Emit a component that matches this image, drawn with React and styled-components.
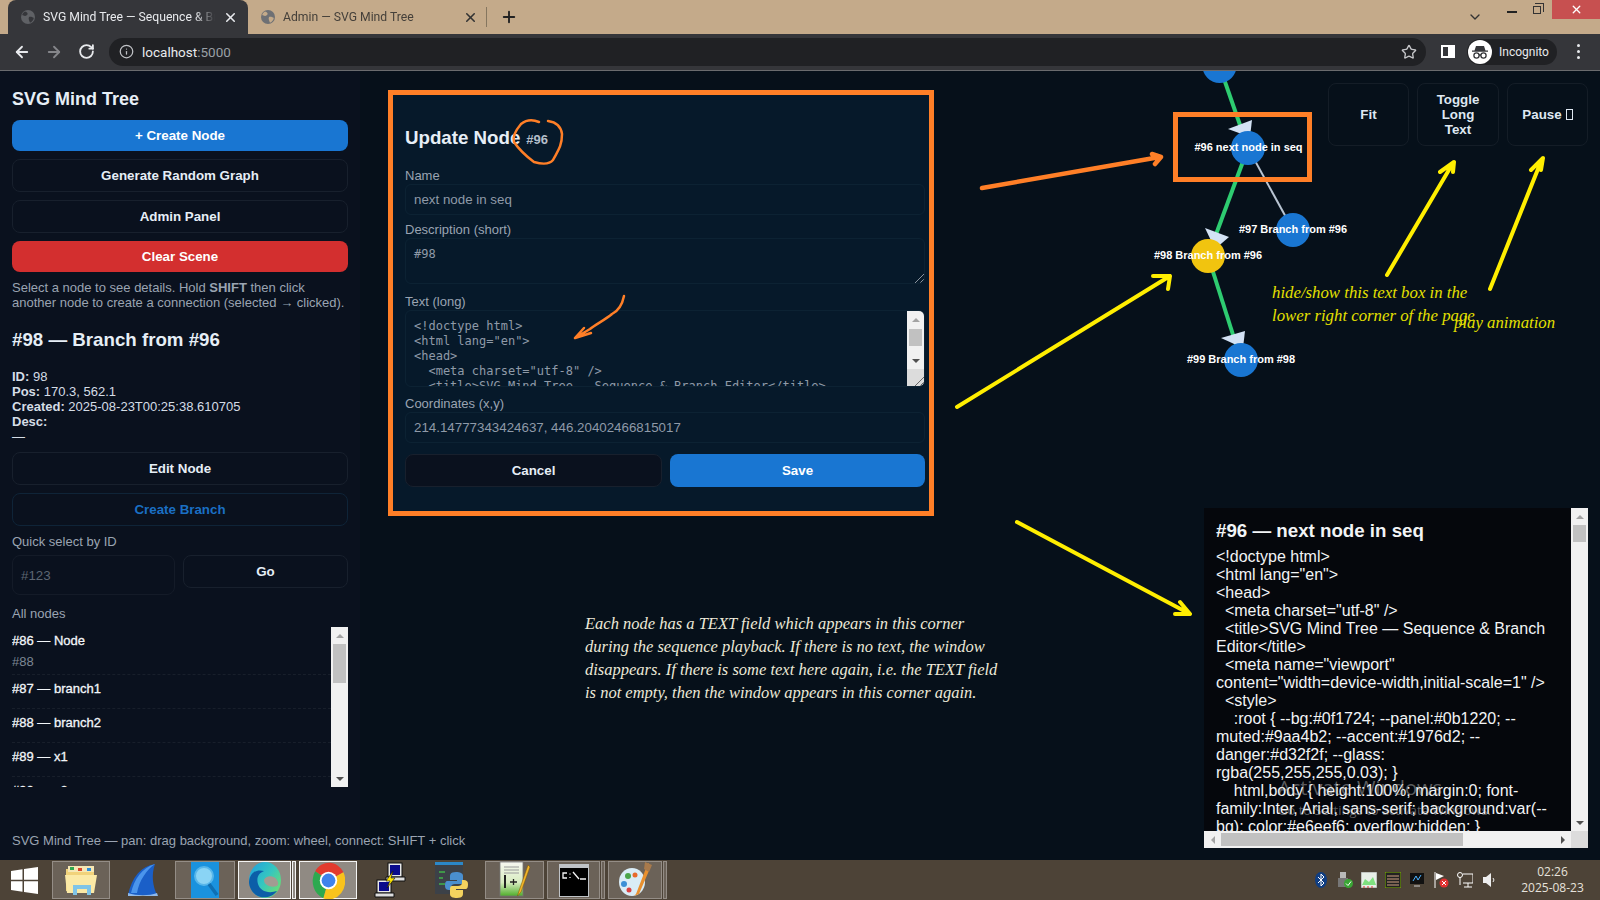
import React from 'react';
import styled, { createGlobalStyle } from 'styled-components';
import { ArrowLeft, ArrowRight, RotateCw, Info, Star, X, Plus, ChevronDown } from 'lucide-react';

const ARIAL = '"Liberation Sans", Arial, sans-serif';
const HAND = '"Liberation Serif", "DejaVu Serif", serif';

const LONG_TEXT = `<!doctype html>
<html lang="en">
<head>
  <meta charset="utf-8" />
  <title>SVG Mind Tree — Sequence & Branch Editor</title>
  <meta name="viewport" content="width=device-width,initial-scale=1" />
  <style>
    :root { --bg:#0f1724; --panel:#0b1220; --muted:#9aa4b2; --accent:#1976d2; --danger:#d32f2f; --glass: rgba(255,255,255,0.03); }
    html,body { height:100%; margin:0; font-family:Inter, Arial, sans-serif; background:var(--bg); color:#e6eef6; overflow:hidden; }
    #app { display:flex; height:100%; }`;

const TEXTAREA_CODE = `<!doctype html>
<html lang="en">
<head>
  <meta charset="utf-8" />
  <title>SVG Mind Tree — Sequence & Branch Editor</title>`;

const GlobalStyle = createGlobalStyle`
	html, body { margin: 0; padding: 0; background: #06101a; overflow: hidden; }
	* { box-sizing: border-box; }
`;

const Shell = styled.div`
	position: relative;
	width: 1600px;
	height: 900px;
	display: flex;
	flex-direction: column;
	overflow: hidden;
	font-family: ${ARIAL};
`;

/* browser chrome */
const TabStrip = styled.div`
	height: 34px;
	background: #c4aa8a;
	display: flex;
	align-items: flex-end;
	padding-left: 8px;
	font-family: Roboto, sans-serif;
	font-size: 12.2px;
`;

const Tab = styled.div`
	width: 240px;
	height: 34px;
	display: flex;
	align-items: center;
	padding: 0 10px 0 13px;
	gap: 8px;
	border-radius: 8px 8px 0 0;
	background: ${p => (p.$active ? '#35363a' : 'transparent')};
	color: ${p => (p.$active ? '#e8eaed' : '#45403a')};
`;

const TabTitle = styled.div`
	flex: 1;
	white-space: nowrap;
	overflow: hidden;
	-webkit-mask-image: linear-gradient(90deg, #000 88%, transparent);
	mask-image: linear-gradient(90deg, #000 88%, transparent);
`;

const TabDivider = styled.div`
	width: 1px;
	height: 20px;
	background: #85765f;
	align-self: center;
	margin-left: -2px;
`;

const NewTab = styled.div`
	align-self: center;
	margin-left: 13px;
	display: flex;
	color: #222;
`;

const WindowControls = styled.div`
	margin-left: auto;
	align-self: flex-start;
	display: flex;
	height: 19px;
	align-items: flex-start;
	color: #333;
`;

const TabSearch = styled.div`
	padding-top: 9px;
	margin-right: 24px;
	display: flex;
`;

const MinimizeGlyph = styled.div`
	width: 10px;
	height: 2px;
	background: #222;
	margin: 11px 16px 0 0;
`;

const RestoreGlyph = styled.div`
	position: relative;
	width: 8px;
	height: 8px;
	border: 1px solid #333;
	margin: 6px 11px 0 0;
	&::after {
		content: '';
		position: absolute;
		left: 1px;
		top: -4px;
		width: 8px;
		height: 8px;
		border: 1px solid #333;
		border-left: 0;
		border-bottom: 0;
	}
`;

const CloseBox = styled.div`
	width: 48px;
	height: 19px;
	background: #c75050;
	color: #fff;
	display: flex;
	align-items: center;
	justify-content: center;
`;

const Toolbar = styled.div`
	height: 37px;
	background: #35363a;
	border-bottom: 1px solid #6a6b6e;
	display: flex;
	align-items: center;
	padding: 0 0 1px 13px;
	color: #e8eaed;
`;

const NavButton = styled.div`
	width: 18px;
	margin-right: 14px;
	display: flex;
	justify-content: center;
	color: ${p => (p.$off ? '#85868a' : '#e8eaed')};
`;

const Omnibox = styled.div`
	width: 1317px;
	height: 28px;
	border-radius: 14px;
	background: #202124;
	display: flex;
	align-items: center;
	padding: 0 10px;
	font-family: Roboto, sans-serif;
	font-size: 13.5px;
	color: #e8eaed;
`;

const UrlPort = styled.span`
	color: #9aa0a6;
`;

const InfoSlot = styled.div`
	display: flex;
	margin-right: 8px;
	color: #c0c2c6;
`;

const StarSlot = styled.div`
	display: flex;
	margin-left: auto;
	margin-right: -1px;
	color: #c6c7ca;
`;

const SidePanelGlyph = styled.div`
	width: 14px;
	height: 13px;
	margin-left: 15px;
	border: 2px solid #fff;
	border-right-width: 7px;
	background: #35363a;
`;

const IncognitoPill = styled.div`
	margin-left: 12px;
	width: 90px;
	height: 26px;
	border-radius: 13px;
	background: #202124;
	display: flex;
	align-items: center;
	padding-left: 1px;
	gap: 7px;
	font-family: Roboto, sans-serif;
	font-size: 12px;
	color: #e8eaed;
`;

const MenuDots = styled.div`
	margin-left: 20px;
	display: flex;
	flex-direction: column;
	gap: 3px;
	i {
		width: 3px;
		height: 3px;
		border-radius: 50%;
		background: #e8eaed;
	}
`;

/* app */
const Workspace = styled.div`
	position: relative;
	flex: 1;
	display: flex;
	min-height: 0;
`;

const Sidebar = styled.aside`
	width: 360px;
	padding: 18px 12px 0;
	background: #0a111e;
	color: #e6eef6;
	font-size: 13px;
`;

const Title = styled.h1`
	margin: 0 0 10px;
	font-size: 18px;
	line-height: 21px;
	font-weight: 700;
`;

const Buttons = styled.div`
	display: flex;
	flex-direction: column;
	gap: 8px;
	margin-top: ${p => p.$top || 0}px;
`;

const Button = styled.div`
	display: flex;
	align-items: center;
	justify-content: center;
	text-align: center;
	padding: 8px;
	line-height: 15px;
	font-size: 13.33px;
	font-weight: 700;
	border-radius: 8px;
	color: ${p => (p.$kind === 'link' ? '#1a6fc4' : '#e6eef6')};
	background: ${p => (p.$kind === 'primary' ? '#1976d2' : p.$kind === 'danger' ? '#d32f2f' : '#0a111e')};
	border: ${p => (p.$kind === 'primary' || p.$kind === 'danger'
		? 'none'
		: p.$kind === 'link' ? '1px solid #0f2438' : '1px solid #18202d')};
	${p => (p.$kind === 'primary' || p.$kind === 'danger' ? 'color: #fff;' : '')}
`;

const Hint = styled.p`
	margin: 8px 0 0;
	line-height: 15px;
	color: #9aa4b2;
	b { font-weight: 700; }
`;

const NodeHeading = styled.h2`
	margin: 19px 0 0;
	font-size: 18.72px;
	line-height: 21px;
	font-weight: 700;
`;

const NodeInfo = styled.div`
	margin-top: 19px;
	line-height: 15px;
	color: #d5dde6;
	b { font-weight: 700; }
`;

const MutedLabel = styled.div`
	margin-top: ${p => p.$top}px;
	line-height: 15px;
	font-size: 13px;
	color: #9aa4b2;
`;

const QuickRow = styled.div`
	margin-top: 6px;
	display: grid;
	grid-template-columns: 163px 1fr;
	gap: 8px;
	align-items: start;
`;

const QuickInput = styled.div`
	height: 40px;
	padding-left: 8px;
	display: flex;
	align-items: center;
	border: 1px solid #141b28;
	border-radius: 8px;
	font-size: 13.33px;
	color: #5d6672;
`;

const NodeList = styled.div`
	margin-top: 6px;
	height: 160px;
	display: flex;
	overflow: hidden;
`;

const NodeRows = styled.div`
	flex: 1;
	overflow: hidden;
`;

const NodeRow = styled.div`
	padding: 6px 0 11px;
	border-bottom: 1px dashed rgba(255, 255, 255, 0.06);
	font-size: 13px;
	line-height: 16px;
	color: #f2f6fa;
	-webkit-text-stroke: 0.3px #f2f6fa;
`;

const NodeDesc = styled.div`
	margin: 5px 0 -6px;
	line-height: 15px;
	color: #7d8794;
	-webkit-text-stroke: 0;
`;

const StatusLine = styled.div`
	position: absolute;
	left: 12px;
	bottom: 11px;
	font-size: 13px;
	line-height: 16px;
	color: #9aa4b2;
	z-index: 2;
`;

/* scrollbars */
const ScrollV = styled.div`
	width: 17px;
	flex: none;
	display: flex;
	flex-direction: column;
	background: #f1f1f1;
`;

const ScrollH = styled.div`
	height: 17px;
	flex: 1;
	display: flex;
	align-items: center;
	background: #f1f1f1;
`;

const ArrowCell = styled.div`
	flex: none;
	width: 17px;
	height: 17px;
	display: flex;
	align-items: center;
	justify-content: center;
`;

const Triangle = styled.div`
	width: 0;
	height: 0;
	border: 4px solid transparent;
	${p => ({
		up: 'border-bottom-color: #a3a3a3; border-top-width: 0;',
		down: 'border-top-color: #505050; border-bottom-width: 0;',
		left: 'border-right-color: #a3a3a3; border-left-width: 0;',
		right: 'border-left-color: #505050; border-right-width: 0;',
	}[p.$dir])}
`;

const ThumbV = styled.div`
	flex: none;
	height: ${p => p.$size}px;
	margin: ${p => p.$offset || 0}px 2px 0;
	background: #c1c1c1;
`;

const ThumbH = styled.div`
	flex: none;
	width: ${p => p.$size}px;
	height: 13px;
	background: #c1c1c1;
`;

const Spacer = styled.div`
	flex: 1;
`;

const ScrollCorner = styled.div`
	flex: none;
	width: 17px;
	height: 17px;
	background: #dcdcdc;
`;

const GripBox = styled.svg`
	display: block;
	width: 9px;
	height: 9px;
	margin: 8px 0 0 8px;
	stroke: ${p => (p.$dark ? '#666' : '#8a939e')};
	stroke-width: 1;
`;

const Grip = ({ dark }) => (
	<GripBox $dark={dark} viewBox="0 0 9 9">
		<path d="M0 9 L9 0 M5 9 L9 5" />
	</GripBox>
);

const VBar = ({ thumb, offset, corner }) => (
	<ScrollV>
		<ArrowCell><Triangle $dir="up" /></ArrowCell>
		<ThumbV $size={thumb} $offset={offset} />
		<Spacer />
		<ArrowCell><Triangle $dir="down" /></ArrowCell>
		{corner && <ScrollCorner><Grip dark /></ScrollCorner>}
	</ScrollV>
);

/* canvas */
const Canvas = styled.main`
	position: relative;
	flex: 1;
	background: #06101a;
	overflow: hidden;
`;

const Graph = styled.svg`
	position: absolute;
	left: 0;
	top: 0;
	width: 1240px;
	height: 789px;
`;

const NodeLabel = styled.text`
	font-family: ${ARIAL};
	font-size: 11px;
	font-weight: 700;
	fill: #fff;
	text-anchor: middle;
`;

const CanvasControls = styled.div`
	position: absolute;
	top: 12px;
	right: 12px;
	display: flex;
	gap: 8px;
`;

const ControlButton = styled.div`
	width: ${p => p.$width}px;
	height: 63px;
	display: flex;
	align-items: center;
	justify-content: center;
	text-align: center;
	padding: 0 14px;
	border: 1px solid #141d27;
	border-radius: 8px;
	font-size: 13.33px;
	line-height: 15px;
	font-weight: 700;
	color: #dfe8f2;
`;

const TofuGlyph = styled.span`
	display: inline-block;
	width: 7px;
	height: 11px;
	margin-left: 4px;
	border: 1px solid #dfe8f2;
	vertical-align: -1px;
`;

/* update modal */
const Modal = styled.section`
	position: absolute;
	left: 28px;
	top: 19px;
	width: 546px;
	height: 426px;
	padding: 32px 4px 0 12px;
	background: #06192a;
	border: 5px solid #ff7f27;
	color: #e6eef6;
`;

const ModalTitle = styled.div`
	display: flex;
	align-items: baseline;
	font-size: 18.72px;
	line-height: 21px;
	font-weight: 700;
`;

const ModalId = styled.span`
	margin-left: 6px;
	font-size: 13px;
	color: #b4bfcb;
`;

const FieldLabel = styled.div`
	margin: ${p => p.$top}px 0 1px;
	font-size: 13px;
	line-height: 15px;
	color: #9aa4b2;
`;

const Field = styled.div`
	height: ${p => p.$height}px;
	position: relative;
	display: flex;
	border: 1px solid #0c2233;
	border-radius: 6px;
	padding-left: 8px;
	font-size: 13.33px;
	line-height: 29px;
	color: #8f9aa8;
	overflow: hidden;
`;

const ShortText = styled.div`
	font-family: "DejaVu Sans Mono", monospace;
	font-size: 12px;
	line-height: 15px;
	padding-top: 8px;
`;

const CodeText = styled.pre`
	flex: 1;
	margin: 0;
	padding-top: 8px;
	font-family: "DejaVu Sans Mono", monospace;
	font-size: 12px;
	line-height: 15px;
	color: #8f9aa8;
	white-space: pre;
	overflow: hidden;
`;

const GripSlot = styled.div`
	position: absolute;
	right: 0;
	bottom: 0;
	width: 17px;
	height: 17px;
`;

const ModalActions = styled.div`
	margin-top: 11px;
	display: grid;
	grid-template-columns: 257px 255px;
	gap: 8px;
`;

/* text panel */
const TextPanel = styled.div`
	position: absolute;
	right: 12px;
	bottom: 12px;
	width: 384px;
	height: 340px;
	display: grid;
	grid-template-columns: 1fr 17px;
	grid-template-rows: 1fr 17px;
	background: #05070c;
	color: #f2f4f6;
`;

const TextBody = styled.div`
	overflow: hidden;
	padding: 12px 12px 0;
`;

const TextTitle = styled.div`
	font-size: 18.72px;
	line-height: 21px;
	font-weight: 700;
	margin-bottom: 7px;
`;

const TextContent = styled.div`
	font-size: 16px;
	line-height: 18px;
	white-space: pre-wrap;
`;

const Watermark = styled.div`
	position: absolute;
	left: 74px;
	top: 267px;
	color: rgba(200, 200, 200, 0.45);
	font-family: "Open Sans", sans-serif;
	font-size: 20px;
	line-height: 26px;
	white-space: nowrap;
	pointer-events: none;
	small {
		display: block;
		font-size: 13px;
		line-height: 18px;
	}
`;

/* annotations */
const Ink = styled.svg`
	position: absolute;
	left: 0;
	top: 0;
	width: 1600px;
	height: 900px;
	z-index: 5;
	pointer-events: none;
	fill: none;
	stroke-linecap: round;
	stroke-linejoin: round;
`;

const Note = styled.div`
	position: absolute;
	z-index: 6;
	left: ${p => p.$x}px;
	top: ${p => p.$y}px;
	font-family: ${HAND};
	font-style: italic;
	font-size: ${p => p.$size}px;
	line-height: ${p => p.$lead}px;
	color: ${p => p.$color};
	white-space: pre;
	pointer-events: none;
`;

/* taskbar */
const Taskbar = styled.footer`
	height: 40px;
	background: #4d4337;
	display: flex;
	align-items: stretch;
`;

const StartButton = styled.div`
	width: 52px;
	display: flex;
	align-items: center;
	padding-left: 11px;
`;

const TaskItems = styled.div`
	display: flex;
	gap: 3px;
	padding: 1px 0;
`;

const TaskItem = styled.div`
	width: ${p => p.$width}px;
	display: flex;
	gap: 1px;
`;

const TaskFace = styled.div`
	flex: 1;
	display: flex;
	align-items: center;
	justify-content: center;
	background: ${p => (p.$state === 'active' ? 'rgba(255,255,255,0.38)' : p.$state === 'open' ? 'rgba(255,255,255,0.17)' : 'transparent')};
	border: ${p => (p.$state === 'active' ? '1.5px solid rgba(255,255,255,0.9)' : p.$state === 'open' ? '1px solid rgba(255,255,255,0.28)' : '1px solid transparent')};
`;

const TaskStack = styled.div`
	width: 4px;
	background: ${p => (p.$state === 'active' ? 'rgba(255,255,255,0.38)' : 'rgba(255,255,255,0.17)')};
	border: ${p => (p.$state === 'active' ? '1px solid rgba(255,255,255,0.9)' : '1px solid rgba(255,255,255,0.28)')};
`;

const Tray = styled.div`
	margin-left: auto;
	display: flex;
	align-items: center;
	gap: 8px;
`;

const Clock = styled.div`
	width: 95px;
	text-align: center;
	font-family: "Open Sans", sans-serif;
	font-size: 12px;
	line-height: 16px;
	color: #e6e2dc;
`;

/* icons */
const Globe = ({ light }) => (
	<svg width="14" height="14" viewBox="0 0 14 14" style={{ flex: 'none' }}>
		<circle cx="7" cy="7" r="7" fill={light ? '#6e7074' : '#5f6165'} />
		<path d="M4 1.5 C6 2 7 3 6.5 4.5 C5.5 5 5.5 6 4 6 C3 6 2 5 1.2 5 C1.5 3.5 2.5 2.2 4 1.5Z M8 7 C10 6.5 12 7.5 12.8 8 C12.5 10 11 12 9 12.8 C8.5 11 7 9 8 7Z" fill={light ? '#c4aa8a' : '#35363a'} />
	</svg>
);

const IncognitoIcon = () => (
	<svg width="24" height="24" viewBox="0 0 24 24" style={{ flex: 'none' }}>
		<circle cx="12" cy="12" r="12" fill="#fff" />
		<path d="M8 6 H16 L17.5 10.5 H20 V11.8 H4 V10.5 H6.5Z" fill="#35363a" />
		<circle cx="8.5" cy="15.5" r="2.6" fill="none" stroke="#35363a" strokeWidth="1.3" />
		<circle cx="15.5" cy="15.5" r="2.6" fill="none" stroke="#35363a" strokeWidth="1.3" />
		<path d="M11 15 H13" stroke="#35363a" strokeWidth="1.3" />
	</svg>
);

const WindowsLogo = () => (
	<svg width="27" height="27" viewBox="0 0 27 27" fill="#fff">
		<path d="M0 4 L11.5 2.3 V12.8 H0Z M13 2.1 L27 0 V12.8 H13Z M0 14.2 H11.5 V24.7 L0 23Z M13 14.2 H27 V27 L13 24.9Z" />
	</svg>
);

const ExplorerIcon = () => (
	<svg width="34" height="32" viewBox="0 0 34 32">
		<path d="M2 5 H14 L16 8 H30 V27 H2Z" fill="#f1d27a" />
		<rect x="4" y="2" width="26" height="6" fill="#f6e7b4" />
		<rect x="6" y="3" width="4" height="3" fill="#2fa84f" />
		<rect x="14" y="4" width="4" height="3" fill="#d9482b" />
		<rect x="23" y="4" width="4" height="3" fill="#2d8ed9" />
		<path d="M1 11 H33 L30 29 H3Z" fill="#fbe9a6" />
		<path d="M9 21 H27 V31 H23 V25 H13 V31 H9Z" fill="#7fc4e8" />
	</svg>
);

const WiresharkIcon = () => (
	<svg width="32" height="34" viewBox="0 0 32 34">
		<path d="M28 1 C14 3 5 14 1 32 H30 C26 24 24 12 28 1Z" fill="#1a5fc8" />
		<path d="M28 1 C20 6 12 18 10 30 H4 C7 16 15 5 28 1Z" fill="#4b95ec" />
		<path d="M1 30 C10 33 22 33 30 30 L31 33 H1Z" fill="#8fb9ea" />
	</svg>
);

const SearchAppIcon = () => (
	<svg width="28" height="36" viewBox="0 0 28 36">
		<rect width="28" height="36" fill="#1a92de" />
		<circle cx="13" cy="14" r="9" fill="#8ad4f5" stroke="#57b6ea" strokeWidth="2" />
		<path d="M18 22 L26 33" stroke="#0e6fb3" strokeWidth="3.5" />
	</svg>
);

const EdgeIcon = () => (
	<svg width="32" height="36" viewBox="0 0 32 36">
		<defs>
			<linearGradient id="edgeTop" x1="0" y1="0" x2="1" y2="0.8">
				<stop offset="0" stopColor="#1f9fe0" />
				<stop offset="0.55" stopColor="#35c6c0" />
				<stop offset="1" stopColor="#6ede6e" />
			</linearGradient>
		</defs>
		<ellipse cx="16" cy="18" rx="16" ry="18" fill="url(#edgeTop)" />
		<path d="M0 20 C1 10 8 7 15 9 C10 11 7 15 9 22 C11 29 19 32 28 29 C23 36 13 37 7 33 C3 30 0 25 0 20Z" fill="#0c5ea8" />
		<path d="M15 18 C17 13 25 13 28 18 C29 20 30 22 28 24 C24 25 21 25 18 23 C16 22 15 20 15 18Z" fill="#a29b92" />
	</svg>
);

const ChromeIcon = () => (
	<svg width="33" height="37" viewBox="0 0 32 36">
		<path d="M16 18 L3 9 A16 18 0 0 1 30.5 10Z" fill="#e33b2e" />
		<path d="M16 18 L3 9 A16 18 0 0 0 11 35.3Z" fill="#2da94f" />
		<path d="M16 18 L30.5 10 A16 18 0 0 1 11 35.3Z" fill="#f9c31c" />
		<circle cx="16" cy="18" r="8.5" fill="#fff" />
		<circle cx="16" cy="18" r="6.7" fill="#3f83ec" />
	</svg>
);

const PuttyIcon = () => (
	<svg width="32" height="36" viewBox="0 0 32 36">
		<rect x="14" y="1" width="14" height="14" fill="#e8e8e8" stroke="#111" />
		<rect x="16" y="3" width="10" height="10" fill="#0a0a8c" />
		<path d="M12 15 H31 V19 H12Z" fill="#ddd" stroke="#111" />
		<rect x="3" y="18" width="14" height="13" fill="#e8e8e8" stroke="#111" />
		<rect x="5" y="20" width="10" height="9" fill="#0a0a8c" />
		<path d="M1 31 H20 V35 H1Z" fill="#ddd" stroke="#111" />
		<path d="M19 9 L12 19 H16 L13 26 L21 16 H17Z" fill="#ffe600" stroke="#111" strokeWidth="0.6" />
	</svg>
);

const PythonIcon = () => (
	<svg width="34" height="36" viewBox="0 0 34 36">
		<rect x="0" y="0" width="28" height="32" fill="#3c4148" />
		<rect x="0" y="0" width="28" height="3" fill="#2b88c9" />
		<path d="M4 10 H10 M4 16 H8 M4 22 H10" stroke="#40b24a" strokeWidth="1.5" />
		<path d="M21 10 C15 10 15 13 15 15 V18 H22 V19 H12 C10 19 10 23 10 24 C10 27 12 28 14 28 H16 V25 C16 23 18 22 20 22 H26 C28 22 28 20 28 18 V14 C28 11 25 10 21 10Z" fill="#4a8fcf" />
		<path d="M22 36 C28 36 28 33 28 31 V28 H21 V27 H31 C33 27 33 23 33 22 C33 19 31 18 29 18 H27 V21 C27 23 25 24 23 24 H17 C15 24 15 26 15 28 V32 C15 35 18 36 22 36Z" fill="#f4d35e" />
	</svg>
);

const NotepadIcon = () => (
	<svg width="32" height="38" viewBox="0 0 32 38">
		<defs>
			<linearGradient id="nppFill" x1="0" y1="0" x2="0" y2="1">
				<stop offset="0" stopColor="#f7f7f0" />
				<stop offset="0.6" stopColor="#d8ecc0" />
				<stop offset="1" stopColor="#4fae2a" />
			</linearGradient>
		</defs>
		<rect x="1" y="1" width="23" height="34" fill="url(#nppFill)" stroke="#777" strokeWidth="0.8" />
		<path d="M5 6 H20 M5 9 H20 M5 12 H20" stroke="#9a9a9a" />
		<path d="M6 14 V27" stroke="#222" strokeWidth="2" />
		<path d="M11 21 H18 M14.5 18 V24" stroke="#222" strokeWidth="1.3" />
		<path d="M29 4 L20 30 L18.5 35 L22 31 L31 6Z" fill="#f1b52b" stroke="#7a5200" strokeWidth="0.5" />
	</svg>
);

const CmdIcon = () => (
	<svg width="30" height="33" viewBox="0 0 30 33">
		<rect width="30" height="33" fill="#bfc3c7" />
		<rect x="1" y="4" width="28" height="28" fill="#000" />
		<path d="M8 9 H4 V14 H8 M11 9.5 V10.5 M11 13 V14 M14 8 L20 15 M21 15 H27" stroke="#f2f2f2" strokeWidth="1.3" fill="none" />
	</svg>
);

const PaintIcon = () => (
	<svg width="34" height="36" viewBox="0 0 34 36">
		<ellipse cx="14" cy="20" rx="13" ry="14" fill="#d9ecf6" />
		<circle cx="10" cy="14" r="3" fill="#4aa54a" />
		<circle cx="17" cy="13" r="2.5" fill="#e86a2c" />
		<circle cx="6" cy="22" r="3" fill="#3b8fd6" />
		<circle cx="11" cy="28" r="2.5" fill="#d94141" />
		<path d="M30 1 L18 32 L16 34 L21 32 L33 4Z" fill="#e8902f" />
		<path d="M27 0 L34 3 L31 10 L26 7Z" fill="#a87a4c" />
	</svg>
);

const TrayIcon = ({ kind }) => {
	const art = {
		bt: <><ellipse cx="8" cy="8" rx="6" ry="8" fill="#103e82" /><path d="M5 5 L11 11 L8 14 V2 L11 5 L5 11" stroke="#fff" fill="none" /></>,
		usb: <><rect x="3" y="0" width="6" height="6" fill="#b9b9b9" /><rect x="1" y="6" width="10" height="9" fill="#777" /><circle cx="11.5" cy="11.5" r="4.5" fill="#3aa635" /><path d="M9 11.5 L11 13.5 L14 9.5" stroke="#fff" fill="none" /></>,
		net: <><rect width="16" height="16" fill="#e8efe8" stroke="#999" /><path d="M1 13 L4 7 L8 10 L12 5 L15 13Z" fill="#7fe07f" /><path d="M2 15 H14" stroke="#d33" strokeDasharray="2 2" /></>,
		hex: <><rect width="16" height="16" fill="#222" stroke="#7fb600" /><path d="M2 4 H14 M2 7 H14 M2 10 H14 M2 13 H14" stroke="#d0a080" /></>,
		monitor: <><rect x="1" y="1" width="14" height="11" fill="#111" /><path d="M4 9 L7 4 L9 8 L12 3" stroke="#4ab2ff" fill="none" /><path d="M5 14 H11" stroke="#ccc" /></>,
		flag: <><path d="M2 0 V16" stroke="#fff" /><path d="M3 1 L11 4 L3 8Z" fill="#fff" /><circle cx="11" cy="11" r="4.5" fill="#e03131" /><path d="M9 9 L13 13 M13 9 L9 13" stroke="#fff" /></>,
		lan: <><circle cx="3" cy="3" r="2.5" fill="none" stroke="#fff" /><path d="M3 5 V13 M6 2 H16 V11 H6 M11 11 V15 M7 15 H15" stroke="#fff" fill="none" /></>,
		sound: <><path d="M2 5 H5 L10 1 V15 L5 11 H2Z" fill="#eee" /><path d="M12 6 Q14 8 12 10" stroke="#eee" fill="none" /></>,
	};
	return <svg width="16" height="16" viewBox="0 0 16 16">{art[kind]}</svg>;
};

const TASKS = [
	{ icon: ExplorerIcon, width: 58, state: 'open' },
	{ icon: WiresharkIcon, width: 59 },
	{ icon: SearchAppIcon, width: 60, state: 'open' },
	{ icon: EdgeIcon, width: 58, state: 'active', stack: true },
	{ icon: ChromeIcon, width: 58, state: 'active' },
	{ icon: PuttyIcon, width: 59 },
	{ icon: PythonIcon, width: 60 },
	{ icon: NotepadIcon, width: 59, state: 'open' },
	{ icon: CmdIcon, width: 58, state: 'open', stack: true },
	{ icon: PaintIcon, width: 59, state: 'open', stack: true },
];

const TRAY = ['bt', 'usb', 'net', 'hex', 'monitor', 'flag', 'lan', 'sound'];

const NODES = [
	{ x: 1248, y: 148 },
	{ x: 1293, y: 230 },
	{ x: 1241, y: 360 },
	{ x: 1219.5, y: 66 },
];

const GREEN_EDGES = [
	'M1219.5 66 L1248 148',
	'M1248 148 L1208 256',
	'M1208 256 L1241 360',
];

const MARKERS = [
	'1228,129 1252,120 1250,137',
	'1205,228 1229,237 1215,249',
	'1221,338 1245,331 1243,348',
];

const LABELS = [
	{ x: 1248.5, y: 151, text: '#96 next node in seq' },
	{ x: 1293, y: 233, text: '#97 Branch from #96' },
	{ x: 1208, y: 259, text: '#98 Branch from #96' },
	{ x: 1241, y: 363, text: '#99 Branch from #98' },
];

const ROWS = [
	{ title: '#86 — Node', desc: '#88' },
	{ title: '#87 — branch1' },
	{ title: '#88 — branch2' },
	{ title: '#89 — x1' },
	{ title: '#90 — x2' },
];

export default function App() {
	return (
		<Shell>
			<GlobalStyle />
			<TabStrip>
				<Tab $active>
					<Globe />
					<TabTitle>SVG Mind Tree — Sequence &amp; Branch Editor</TabTitle>
					<X size={15} strokeWidth={2.5} color="#e8eaed" />
				</Tab>
				<Tab>
					<Globe light />
					<TabTitle>Admin — SVG Mind Tree</TabTitle>
					<X size={15} strokeWidth={2.5} color="#333" />
				</Tab>
				<TabDivider />
				<NewTab><Plus size={18} strokeWidth={2.5} /></NewTab>
				<WindowControls>
					<TabSearch><ChevronDown size={16} strokeWidth={2} /></TabSearch>
					<MinimizeGlyph />
					<RestoreGlyph />
					<CloseBox><X size={13} strokeWidth={2.5} /></CloseBox>
				</WindowControls>
			</TabStrip>
			<Toolbar>
				<NavButton><ArrowLeft size={18} strokeWidth={2.4} /></NavButton>
				<NavButton $off><ArrowRight size={18} strokeWidth={2.4} /></NavButton>
				<NavButton><RotateCw size={17} strokeWidth={2.6} /></NavButton>
				<Omnibox>
					<InfoSlot><Info size={15} /></InfoSlot>
					localhost<UrlPort>:5000</UrlPort>
					<StarSlot><Star size={16} strokeWidth={2} /></StarSlot>
				</Omnibox>
				<SidePanelGlyph />
				<IncognitoPill><IncognitoIcon />Incognito</IncognitoPill>
				<MenuDots><i /><i /><i /></MenuDots>
			</Toolbar>
			<Workspace>
				<Sidebar>
					<Title>SVG Mind Tree</Title>
					<Buttons>
						<Button $kind="primary">+ Create Node</Button>
						<Button>Generate Random Graph</Button>
						<Button>Admin Panel</Button>
						<Button $kind="danger">Clear Scene</Button>
					</Buttons>
					<Hint>Select a node to see details. Hold <b>SHIFT</b> then click<br />another node to create a connection (selected → clicked).</Hint>
					<NodeHeading>#98 — Branch from #96</NodeHeading>
					<NodeInfo>
						<b>ID:</b> 98<br />
						<b>Pos:</b> 170.3, 562.1<br />
						<b>Created:</b> 2025-08-23T00:25:38.610705<br />
						<b>Desc:</b><br />
						—
					</NodeInfo>
					<Buttons $top={8}>
						<Button>Edit Node</Button>
						<Button $kind="link">Create Branch</Button>
					</Buttons>
					<MutedLabel $top={8}>Quick select by ID</MutedLabel>
					<QuickRow>
						<QuickInput>#123</QuickInput>
						<Button>Go</Button>
					</QuickRow>
					<MutedLabel $top={11}>All nodes</MutedLabel>
					<NodeList>
						<NodeRows>
							{ROWS.map(row => (
								<NodeRow key={row.title}>
									{row.title}
									{row.desc && <NodeDesc>{row.desc}</NodeDesc>}
								</NodeRow>
							))}
						</NodeRows>
						<VBar thumb={39} />
					</NodeList>
				</Sidebar>
				<Canvas>
					<Graph viewBox="360 71 1240 789">
						{GREEN_EDGES.map(d => <path key={d} d={d} stroke="#2ecc71" strokeWidth="4" fill="none" />)}
						<path d="M1248 148 L1293 230" stroke="#b8c4d2" strokeWidth="2" />
						{MARKERS.map(points => <polygon key={points} points={points} fill="#d3e2f5" />)}
						{NODES.map(n => <circle key={n.y} cx={n.x} cy={n.y} r="17" fill="#1976d2" />)}
						<circle cx="1208" cy="256" r="17" fill="#f1c40f" />
						{LABELS.map(l => <NodeLabel key={l.text} x={l.x} y={l.y}>{l.text}</NodeLabel>)}
					</Graph>
					<CanvasControls>
						<ControlButton $width={81}>Fit</ControlButton>
						<ControlButton $width={82}>Toggle Long Text</ControlButton>
						<ControlButton $width={81}>Pause<TofuGlyph /></ControlButton>
					</CanvasControls>
					<Modal>
						<ModalTitle>Update Node<ModalId>#96</ModalId></ModalTitle>
						<FieldLabel $top={18}>Name</FieldLabel>
						<Field $height={31}>next node in seq</Field>
						<FieldLabel $top={7}>Description (short)</FieldLabel>
						<Field $height={46}>
							<ShortText>#98</ShortText>
							<GripSlot><Grip /></GripSlot>
						</Field>
						<FieldLabel $top={10}>Text (long)</FieldLabel>
						<Field $height={77}>
							<CodeText>{TEXTAREA_CODE}</CodeText>
							<VBar thumb={17} offset={1} corner />
						</Field>
						<FieldLabel $top={9}>Coordinates (x,y)</FieldLabel>
						<Field $height={31}>214.14777343424637, 446.20402466815017</Field>
						<ModalActions>
							<Button>Cancel</Button>
							<Button $kind="primary">Save</Button>
						</ModalActions>
					</Modal>
					<TextPanel>
						<TextBody>
							<TextTitle>#96 — next node in seq</TextTitle>
							<TextContent>{LONG_TEXT}</TextContent>
						</TextBody>
						<VBar thumb={17} offset={0} />
						<ScrollH>
							<ArrowCell><Triangle $dir="left" /></ArrowCell>
							<ThumbH $size={242} />
							<Spacer />
							<ArrowCell><Triangle $dir="right" /></ArrowCell>
						</ScrollH>
						<ScrollCorner />
						<Watermark>Activate Windows<small>Go to Settings to activate Windows.</small></Watermark>
					</TextPanel>
				</Canvas>
				<StatusLine>SVG Mind Tree — pan: drag background, zoom: wheel, connect: SHIFT + click</StatusLine>
			</Workspace>
			<Taskbar>
				<StartButton><WindowsLogo /></StartButton>
				<TaskItems>
					{TASKS.map(({ icon: Icon, width, state, stack }, i) => (
						<TaskItem key={i} $width={width}>
							<TaskFace $state={state}><Icon /></TaskFace>
							{stack && <TaskStack $state={state} />}
						</TaskItem>
					))}
				</TaskItems>
				<Tray>
					{TRAY.map(kind => <TrayIcon key={kind} kind={kind} />)}
					<Clock>02:26<br />2025-08-23</Clock>
				</Tray>
			</Taskbar>
			<Ink viewBox="0 0 1600 900">
				<rect x="1175.5" y="114.5" width="134" height="65" stroke="#ff7f27" strokeWidth="5" strokeLinejoin="miter" />
				<path d="M982 188 L1160 157 M1152 154 L1161 157 L1155 164" stroke="#ff7f27" strokeWidth="4.5" />
				<path d="M539 122 C532 119 526 120 521 124 C516 130 512 136 514 142 C518 148 526 156 534 162 C541 164 549 165 553 160 C557 152 562 147 562 134 C561 126 555 122 548 121" stroke="#ff7f27" strokeWidth="2.5" />
				<path d="M624 296 C622 306 618 311 612 314 C605 320 596 324 590 329 L575 338 M584 328 L575 338 L591 333" stroke="#ff7f27" strokeWidth="2.5" />
				<g stroke="#ffee00" strokeWidth="4">
					<path d="M957 407 L1170 276 M1153 276 L1170 276 L1168 289" />
					<path d="M1017 522 L1190 614 M1180 602 L1190 614 L1175 614" />
					<path d="M1387 275 L1453 163 M1440 172 L1454 162 L1453 172" />
					<path d="M1490 289 L1542 159 M1531 170 L1543 158 L1541 170" />
				</g>
			</Ink>
			<Note $x={585} $y={612} $size={16.5} $lead={23} $color="#ece9d8">{`Each node has a TEXT field which appears in this corner
during the sequence playback. If there is no text, the window
disappears. If there is some text here again, i.e. the TEXT field
is not empty, then the window appears in this corner again.`}</Note>
			<Note $x={1272} $y={281} $size={16.8} $lead={23} $color="#e5e000">{`hide/show this text box in the
lower right corner of the page`}</Note>
			<Note $x={1454} $y={313} $size={16.8} $lead={20} $color="#e5e000">play animation</Note>
		</Shell>
	);
}
